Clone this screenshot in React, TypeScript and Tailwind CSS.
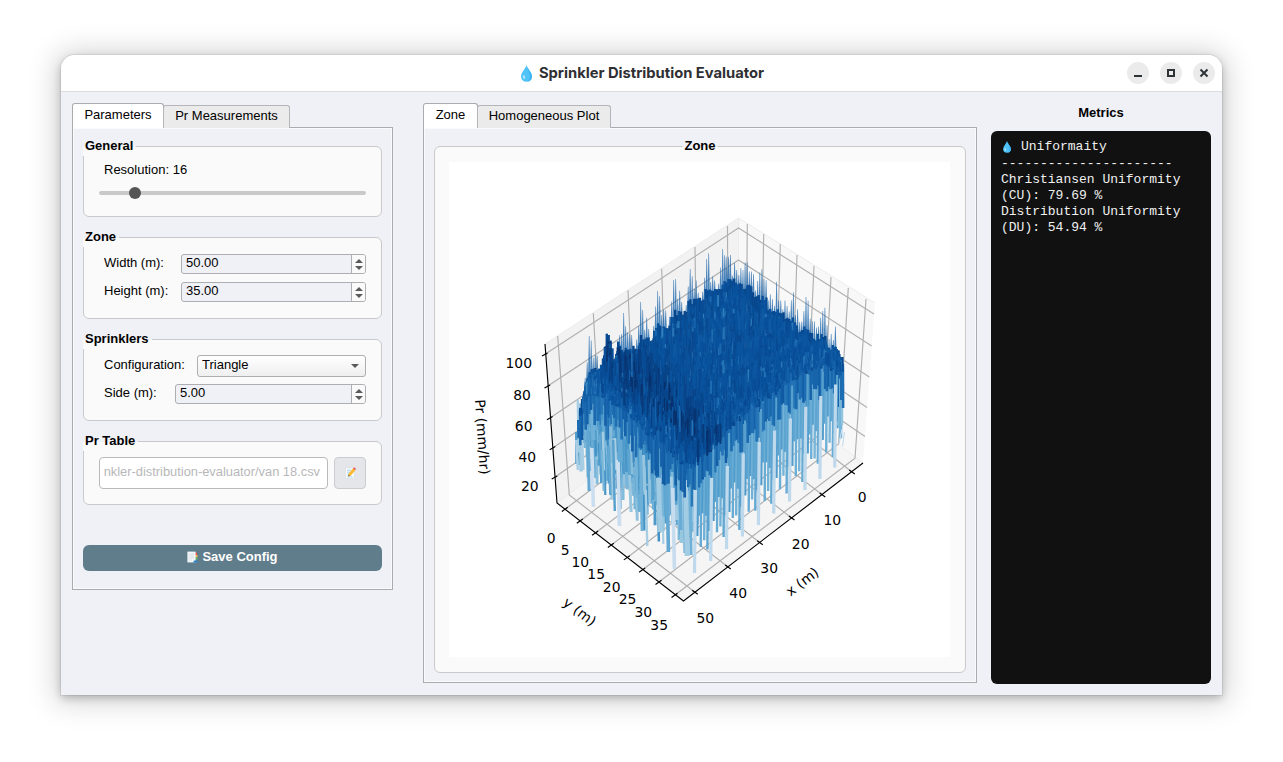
import type { ReactNode } from "react";

type Pt = [number, number];

/* ---------- helpers for the surface plot ---------- */

function makeRandom(seed: number) {
  let s = seed;
  return () => {
    s = (s * 1664525 + 1013904223) % 4294967296;
    return s / 4294967296;
  };
}

function interp(points: Pt[], x: number) {
  if (x <= points[0][0]) return points[0][1];
  for (let i = 1; i < points.length; i++) {
    const [x1, y1] = points[i];
    const [x0, y0] = points[i - 1];
    if (x <= x1) return y0 + ((y1 - y0) * (x - x0)) / (x1 - x0);
  }
  return points[points.length - 1][1];
}

const BLUES: [number, number, number][] = [
  [222, 235, 247],
  [198, 219, 239],
  [158, 202, 225],
  [107, 174, 214],
  [66, 146, 198],
  [33, 113, 181],
  [8, 81, 156],
  [8, 48, 107],
];

function blue(t: number) {
  const c = Math.max(0, Math.min(0.9999, t)) * (BLUES.length - 1);
  const i = Math.floor(c);
  const f = c - i;
  const a = BLUES[i];
  const b = BLUES[i + 1];
  return `rgb(${a.map((v, k) => Math.round(v + (b[k] - v) * f)).join(",")})`;
}

const TOP: Pt[] = [
  [575, 428], [579, 406], [583, 392], [585, 379], [589, 371], [601, 365], [603, 347], [606, 334], [609, 338],
  [613, 358], [617, 342], [621, 350], [626, 346], [636, 347], [639, 338], [652, 337], [655, 324], [669, 324],
  [672, 313], [685, 313], [688, 301], [701, 300], [704, 290], [718, 290], [721, 281], [738, 280],
  [742, 287], [750, 286], [755, 297], [765, 298], [768, 310], [780, 312], [784, 318], [794, 320],
  [797, 329], [804, 325], [812, 338], [824, 335], [827, 350], [834, 343], [838, 351], [842, 362], [844, 372],
];

const DARK_END: Pt[] = [
  [575, 432], [583, 396], [588, 388], [600, 390], [620, 402], [645, 426], [670, 450], [690, 464], [705, 445],
  [720, 428], [750, 405], [780, 382], [810, 362], [825, 358], [844, 372],
];

const LEFT_BOTTOM: Pt[] = [
  [575, 468], [585, 470], [592, 480], [605, 486], [620, 500], [635, 510], [650, 525], [665, 535], [680, 545], [697, 552],
];

const ICICLES: Pt[] = [
  [695.3, 573], [711.5, 561], [727.3, 549], [743.2, 536.5], [759.2, 525], [774.5, 513.5], [790.3, 501.5],
  [805.7, 490], [820.7, 479], [835.5, 467.5],
];

type Sliver = { x: number; w: number; y0: number; y1: number; fill: string; lean?: number };

function buildSurface() {
  const rnd = makeRandom(20718);
  const out: Sliver[] = [];
  const faint: Sliver[] = [];

  // thin spikes along the far edges
  const leftPeaks: Pt[] = [
    [588, 336], [622.5, 313], [639.5, 302], [656.5, 291], [672.5, 280], [689, 269], [705.5, 259], [721.5, 249],
  ];
  leftPeaks.forEach(([px, py]) => {
    for (let k = 0; k < 7; k++) {
      const x = px - 4 + k * 2;
      const h = [14, 20, 0, 34, 16, 22, 15][k];
      const base = interp(TOP, x) + 4;
      faint.push({ x, w: 2.4, y0: k === 2 ? py : base - h * (0.7 + rnd() * 0.5), y1: base + 4, fill: blue(0.78) });
    }
  });
  for (let x = 725; x < 835; x += 2.1) {
    const base = interp(TOP, x) + 4;
    const cycle = (x - 727) % 15.5;
    const h = cycle < 4 ? 22 + rnd() * 12 : 8 + rnd() * 15;
    faint.push({ x, w: 2.3, y0: base - h, y1: base + 4, fill: blue(0.8) });
  }

  // skirt on the left flank
  for (let x = 575; x < 696; x += 2) {
    const top = Math.max(interp(DARK_END, x) - 8, interp(TOP, x) + 4);
    const bot = interp(LEFT_BOTTOM, x) - rnd() * 32 + 4;
    out.push({ x, w: 3, y0: top, y1: bot, fill: blue(0.3 + rnd() * 0.28), lean: 0.6 });
    const midEnd = top + 20 + rnd() * 45;
    out.push({ x, w: 2.8, y0: top, y1: Math.min(bot, midEnd), fill: blue(0.5 + rnd() * 0.22), lean: 0.4 });
  }
  for (let i = 0; i < 105; i++) {
    const x = 576 + rnd() * 118;
    const b = interp(LEFT_BOTTOM, x);
    const start = b - 72 + rnd() * 44;
    const deep = rnd() < 0.22 ? 16 : -14;
    out.push({
      x,
      w: 2 + rnd() * 1.8,
      y0: start,
      y1: b + deep - rnd() * 18,
      fill: blue(0.24 + rnd() * 0.34),
      lean: 1,
    });
  }
  const leftTips: [number, number, number, number, number][] = [
    [590, 448, 507, 3.6, 0.12], [601, 450, 491, 2.2, 0.38], [586, 425, 491, 3, 0.46], [607.5, 446, 495, 2.6, 0.46],
    [612, 440, 511, 2.4, 0.5], [616, 460, 526, 3.8, 0.12], [628, 475, 512, 3, 0.3], [639, 450, 531, 3, 0.42],
    [644.5, 490, 546, 2.4, 0.25], [656, 478, 532, 5, 0.28], [665, 460, 552, 3.6, 0.46], [671, 488, 569, 3.6, 0.13],
    [683, 480, 556, 5, 0.27], [688, 465, 555, 3, 0.42], [580, 430, 470, 3, 0.25],
    [575, 440, 470, 2.6, 0.24], [650, 430, 500, 3, 0.5], [634, 435, 498, 3, 0.4], [678, 455, 530, 3, 0.44],
    [590, 403, 440, 4, 0.42], [616.5, 420, 462, 5, 0.45], [638, 404, 422, 2, 0.4], [660, 440, 475, 2.4, 0.5],
  ];
  leftTips.forEach(([x, y0, y1, w, c]) => out.push({ x, w, y0, y1, fill: blue(c), lean: 1.6 }));

  // repeating skirt on the right flank
  ICICLES.forEach(([tx, ty], i) => {
    const cols: [number, number, number, number][] = [
      [1.5, -121, -42, 0.54], [3.4, -106, -60, 0.5], [5, -108, -28, 0.45], [6.8, -104, -62, 0.53], [8.4, -103, -32, 0.42],
      [10, -106, -56, 0.5], [11.6, -109, -18, 0.47], [13, -112, -40, 0.5], [14.2, -108, -48, 0.44],
    ];
    cols.forEach(([dx, t, b, c]) => {
      const x = tx + dx;
      if (x > 842) return;
      const yy = ty - dx * 0.73;
      const y0 = Math.max(yy + t - 18, interp(TOP, x) + 5);
      out.push({ x, w: 2.4, y0, y1: yy + b + rnd() * 8, fill: blue(c - i * 0.004), lean: -0.7 });
    });
  });
  for (let x = 837; x < 843; x += 2) {
    out.push({ x, w: 2.2, y0: 374, y1: 420 + rnd() * 22, fill: blue(0.3 + rnd() * 0.16) });
  }

  // transition band under the plateau
  for (let x = 577; x < 842; x += 1.8) {
    const d = interp(DARK_END, x);
    const right = x > 697;
    const phase = (((x - 695) % 15.8) + 15.8) % 15.8;
    const drop = right ? (phase < 2 ? 10 : phase < 5 ? 30 : phase > 12 ? 34 : 22) : 6 + rnd() * 34;
    const y0 = Math.max(d - 24, interp(TOP, x) + 3);
    out.push({ x, w: 2.6, y0, y1: d + drop + rnd() * 8, fill: blue(0.68 + rnd() * 0.14), lean: 0.2 });
  }
  ICICLES.forEach(([tx, ty]) => {
    out.push({ x: tx + 0.8, w: 2, y0: ty - 116, y1: ty - 46, fill: blue(0.5), lean: -0.5 });
    out.push({ x: tx - 1.5, w: 3.2, y0: ty - 83, y1: ty, fill: blue(0.17), lean: -0.9 });
  });

  return { out, faint };
}

function buildPlateau() {
  const rnd = makeRandom(991);
  const outline: Sliver[] = [];
  const grain: Sliver[] = [];
  for (let x = 579; x < 842; x += 1.9) {
    const top = interp(TOP, x) + (rnd() - 0.4) * 8;
    const bot = interp(DARK_END, x) - 4 + rnd() * 14;
    outline.push({ x, w: 2.4, y0: top, y1: Math.max(bot, top + 8), fill: blue(0.85 + rnd() * 0.06) });
  }
  for (let i = 0; i < 4300; i++) {
    const x = 582 + rnd() * 258;
    const top = interp(TOP, x);
    const bot = interp(DARK_END, x) + 4;
    const len = 3 + rnd() * 11;
    const y = top + 3 + rnd() * Math.max(0, bot - top - len);
    const band = (((y + 0.28 * x) % 17) + 17) % 17;
    const mid = 335 + (x - 600) * 0.88;
    const ridge = Math.exp(-Math.pow((y - mid) / 28, 2)) * (x < 735 ? 1 : 0);
    const near = Math.max(0, 1 - (bot - y) / 28);
    let t = 0.855 + (rnd() - 0.5) * 0.08;
    if (band < 4 && rnd() < 0.36) t -= 0.08 + rnd() * 0.12;
    t += ridge * 0.16 * rnd();
    t -= near * 0.09 * rnd();
    if (x < 600) t -= 0.08 * rnd();
    grain.push({ x, w: 1 + rnd() * 1.4, y0: y, y1: y + (ridge > 0.4 ? len * 1.9 : len), fill: blue(t) });
  }
  return { outline, grain };
}

const surface = buildSurface();
const plateau = buildPlateau();

function Slivers({ items, opacity, pointed }: { items: Sliver[]; opacity?: number; pointed?: boolean }) {
  return (
    <g opacity={opacity}>
      {items.map((s, i) => {
        const l = s.lean ?? 0;
        const d = pointed
          ? `M${(s.x + s.w / 2 - 0.3).toFixed(1)} ${s.y0.toFixed(1)}h.6L${(s.x + s.w).toFixed(1)} ${s.y1.toFixed(1)}h${(-s.w).toFixed(1)}Z`
          : `M${s.x.toFixed(1)} ${s.y0.toFixed(1)}h${s.w.toFixed(1)}L${(s.x + s.w + l).toFixed(1)} ${s.y1.toFixed(1)}h${(-s.w).toFixed(1)}Z`;
        return <path key={i} fill={s.fill} d={d} />;
      })}
    </g>
  );
}

const X_LINES: [number, number, number, number, number, number][] = [
  [557.7, 336, 569.3, 495, 695, 592.3],
  [593.3, 313.3, 602.5, 469, 728, 567],
  [628, 290.3, 634.6, 445, 760, 542.7],
  [661.7, 268.7, 666, 421, 791.7, 518],
  [695, 247, 697, 398, 822.5, 495],
  [727.5, 226, 728, 375, 852, 472],
];

const Y_LINES: [number, number, number, number, number, number][] = [
  [747.3, 224, 746, 373, 565, 509.3],
  [763.7, 234, 761, 385, 580, 521],
  [780.3, 244, 776, 396, 595.3, 533],
  [797, 255, 792, 408, 611, 545.3],
  [814, 266, 807, 420, 627, 557.7],
  [831, 277, 823, 432, 642.3, 570],
  [848.3, 288, 838.5, 444, 658.7, 582.3],
  [866, 299, 855, 458.3, 674.7, 595.3],
];

const Z_LINES: [number, number, number, number, number][] = [
  [545, 354.3, 228, 874, 314],
  [547.5, 386.3, 260, 871.7, 346],
  [550, 418, 291, 869.3, 377],
  [552.7, 448, 321, 867, 407.5],
  [554.7, 477.3, 350, 865, 436.5],
];

const TICK_LABELS: [string, number, number][] = [
  ["100", 518.8, 363], ["80", 522, 395], ["60", 523.7, 426], ["40", 527.3, 457], ["20", 529.8, 486],
  ["0", 551.2, 538], ["5", 565.2, 550], ["10", 580.3, 562], ["15", 596.2, 574], ["20", 611.7, 587],
  ["25", 627.5, 599], ["30", 643.3, 612], ["35", 659.2, 625],
  ["0", 862.2, 497], ["10", 832.3, 520], ["20", 800.7, 544], ["30", 769.2, 568], ["40", 738.2, 593], ["50", 705.3, 618],
];

function SurfacePlot() {
  return (
    <svg viewBox="449 162 501 495" className="block h-[495px] w-[501px] bg-white">
      <path d="M545 344 738.5 218 738 367 557 503Z" fill="#f2f2f2" />
      <path d="M738.5 218 875 303 863 463 738 367Z" fill="#f8f8f8" />
      <path d="M557 503 738 367 863 463 683.5 601Z" fill="#f5f5f5" />
      <path
        d="M545 344 738.5 218 875 303M738.5 218V367M557 503 738 367 863 463"
        fill="none"
        stroke="#ececec"
        strokeWidth="1"
      />
      <g fill="none" stroke="#b0b0b0" strokeWidth="1.15">
        {X_LINES.map((l) => (
          <path key={l[0]} d={`M${l[0]} ${l[1]}L${l[2]} ${l[3]}L${l[4]} ${l[5]}`} />
        ))}
        {Y_LINES.map((l) => (
          <path key={l[0]} d={`M${l[0]} ${l[1]}L${l[2]} ${l[3]}L${l[4]} ${l[5]}`} />
        ))}
        {Z_LINES.map((l) => (
          <path key={l[0]} d={`M${l[0]} ${l[1]}L738.5 ${l[2]}L${l[3]} ${l[4]}`} />
        ))}
      </g>
      <g fill="none" stroke="#000" strokeWidth="1.15">
        <path d="M545 344 557 503 683.5 601 863 463" />
        {X_LINES.map((l) => (
          <path key={l[4]} d={`M${l[4] - 2.8} ${l[5] - 2}l5.6 4`} />
        ))}
        {Y_LINES.map((l) => (
          <path key={l[4]} d={`M${l[4] - 3.2} ${l[5] + 2.2}l6 -4.2`} />
        ))}
        {Z_LINES.map((l) => (
          <path key={l[1]} d={`M${l[0] - 3} ${l[1] + 1.8}l5.6 -3.2`} />
        ))}
      </g>
      <Slivers items={surface.faint} opacity={0.75} pointed />
      <Slivers items={surface.out} />
      <Slivers items={plateau.outline} />
      <Slivers items={plateau.grain} />
      <path d="M844.5 432l-2 14M842 429l-3 15" stroke="#c6dbef" strokeWidth="1.2" />
      <g fill="#000" fontFamily="'DejaVu Sans', sans-serif" fontSize="13.9" textAnchor="middle">
        {TICK_LABELS.map(([t, x, y]) => (
          <text key={`${x}-${y}`} x={x} y={y + 5}>
            {t}
          </text>
        ))}
        <text transform="translate(482 437) rotate(86)" y="4.5">Pr (mm/hr)</text>
        <text transform="translate(579.5 612) rotate(37.5)" y="4.5">y (m)</text>
        <text transform="translate(802.5 582) rotate(-37.5)" y="4.5">x (m)</text>
      </g>
    </svg>
  );
}

/* ---------- small drawings ---------- */

function Drop({ className }: { className: string }) {
  return (
    <svg viewBox="0 0 11 17" className={className}>
      <path d="M5.5 0C6.5 3.8 11 7.6 11 11.4A5.5 5.4 0 0 1 0 11.4C0 7.6 4.5 3.8 5.5 0Z" fill="#4fc3f7" />
      <path d="M5.5 0C6.5 3.8 11 7.6 11 11.4A5.5 5.4 0 0 1 7 16.6C10 14 9.4 9 5.5 0Z" fill="#3db4f2" />
      <ellipse cx="3" cy="12" rx="1.1" ry="2" fill="#a9e4fb" transform="rotate(-20 3 12)" />
    </svg>
  );
}

function Memo() {
  return (
    <svg viewBox="0 0 11 12" className="h-[12px] w-[11px]">
      <path d="M.5 1h8.8v10.4H.5z" fill="#fbfdfe" stroke="#cfd4d8" strokeWidth=".5" />
      <path d="M2 3.2h4.5M2 5.2h3.5M2 7.2h2M2 9.8h5.5" stroke="#8cc9e8" strokeWidth=".8" />
      <path d="M3.1 9.4 3.8 6.6 8.2 1.2 10.4 2.9 6 8.4Z" fill="#fdb92c" />
      <path d="M3.1 9.4 3.6 7.4 4.8 8.6Z" fill="#5b4a3c" />
      <path d="M8 1.5 9.1.2 11 1.8 10 3.2Z" fill="#ef5b5b" />
    </svg>
  );
}

function Tabs() {
  return (
    <svg viewBox="0 0 11 12" className="h-[12px] w-[11px]">
      <path d="M8 1.5h2v2.4H8z" fill="#ef5350" />
      <path d="M8 4h2.5v2.2H8z" fill="#ffb74d" />
      <path d="M8 6.4h2.6v2H8z" fill="#66bb6a" />
      <path d="M.4.6h8.2v10.8H.4z" fill="#f5f8fa" />
      <path d="M1.6 3h5.6M1.6 5h5.6M1.6 7h5.6M1.6 9h3" stroke="#c9d3d9" strokeWidth=".7" />
      <path d="M7 9.6h3.4v1.8H6z" fill="#2e86c8" />
    </svg>
  );
}

/* ---------- widgets ---------- */

function TabBar({ active, other, first, second }: { active: string; other: string; first: string; second: string }) {
  return (
    <div className="relative z-10 -mb-px flex h-[25px] items-end">
      <div
        className={`${first} flex h-[25px] items-center justify-center rounded-t-[3px] border border-b-0 border-[#a9abae] bg-white pb-[2px]`}
      >
        {active}
      </div>
      <div
        className={`${second} -ml-px flex h-[23px] items-center justify-center rounded-t-[3px] border border-b-0 border-[#b4b5b8] bg-[#ebebeb] pb-[3px]`}
      >
        {other}
      </div>
    </div>
  );
}

function Group({
  title,
  className,
  centered,
  children,
}: {
  title: string;
  className: string;
  centered?: boolean;
  children: ReactNode;
}) {
  return (
    <section className={`relative rounded-[6px] border border-[#c9c9cb] bg-[#fafafa] ${className}`}>
      <h2
        className={`absolute -top-[9px] flex h-[18px] items-center bg-linear-to-b from-[#f0f1f6] from-50% to-[#fafafa] to-50% pb-[3px] font-bold ${
          centered ? "left-1/2 -translate-x-1/2 px-[2px]" : "-left-px pr-[3px] pl-[2px]"
        }`}
      >
        {title}
      </h2>
      {children}
    </section>
  );
}

function SpinBox({ value, className }: { value: string; className: string }) {
  return (
    <div className={`flex h-[20px] overflow-hidden rounded-[3px] border border-[#acaeb1] bg-[#f0f1f6] ${className}`}>
      <span className="flex-1 pl-[4px] leading-[16px]">{value}</span>
      <span className="flex w-[14px] flex-col items-center justify-center gap-[3px] border-l border-[#acaeb1] bg-[#fafafa]">
        <svg viewBox="0 0 8 4" className="h-[4px] w-[8px]">
          <path d="M0 4 4 0 8 4Z" fill="#5a5a5c" />
        </svg>
        <svg viewBox="0 0 8 4" className="h-[4px] w-[8px]">
          <path d="M0 0 4 4 8 0Z" fill="#5a5a5c" />
        </svg>
      </span>
    </div>
  );
}

function WindowButton({ children }: { children: ReactNode }) {
  return (
    <button className="flex size-[22px] items-center justify-center rounded-full bg-[#ebebeb]">
      <svg viewBox="0 0 10 10" className="size-[10px]" fill="none" stroke="#2e3436" strokeWidth="2">
        {children}
      </svg>
    </button>
  );
}

export default function App() {
  return (
    <div className="h-[762px] w-[1283px] overflow-hidden bg-white pt-[55px] pl-[61px] font-['Liberation_Sans',Arial,sans-serif] text-[13px] text-black">
      <div className="flex h-[640px] w-[1161px] flex-col overflow-hidden rounded-t-[14px] bg-[#f0f1f6] shadow-[0_0_0_1px_rgba(0,0,0,0.06),0_3px_8px_rgba(0,0,0,0.22),0_2px_28px_6px_rgba(0,0,0,0.17)]">
        <header className="flex h-[37px] shrink-0 items-center border-b border-[#dcdcdf] bg-white">
          <div className="w-[150px]" />
          <div className="flex flex-1 items-center justify-center gap-[7px] pl-[2px]">
            <Drop className="h-[17px] w-[11px]" />
            <h1 className="font-['Inter',sans-serif] text-[14.74px] font-bold whitespace-nowrap text-[#2f2f33]">
              Sprinkler Distribution Evaluator
            </h1>
          </div>
          <div className="flex w-[150px] justify-end gap-[11px] pr-[7px]">
            <WindowButton>
              <path d="M1 8h8" />
            </WindowButton>
            <WindowButton>
              <path d="M2 2h6v6H2z" />
            </WindowButton>
            <WindowButton>
              <path d="M1.5 1.5 8.5 8.5M8.5 1.5 1.5 8.5" />
            </WindowButton>
          </div>
        </header>

        <main className="flex flex-1 pt-[11px] pr-[11px] pb-[11px] pl-[11px]">
          <aside className="w-[321px]">
            <TabBar active="Parameters" other="Pr Measurements" first="w-[92px]" second="w-[127px]" />
            <div className="flex h-[463px] flex-col border border-[#a9abae] px-[10px] pt-[18px] shadow-[inset_0_0_0_1px_#fafafc]">
              <Group title="General" className="mb-[20px] h-[71px] px-[15px] pt-[14px]">
                <div className="pl-[5px] leading-[18px]">Resolution: 16</div>
                <div className="mt-[8px] flex h-[12px] items-center rounded-full">
                  <div className="flex h-[4px] w-full items-center rounded-full bg-[#c9c9c9] pl-[30px]">
                    <div className="size-[12px] rounded-full bg-[#555]" />
                  </div>
                </div>
              </Group>

              <Group title="Zone" className="mb-[20px] flex h-[82px] flex-col gap-[8px] px-[15px] pt-[16px]">
                <div className="flex">
                  <label className="w-[82px] pl-[5px] leading-[18px]">Width (m):</label>
                  <SpinBox value="50.00" className="flex-1" />
                </div>
                <div className="flex">
                  <label className="w-[82px] pl-[5px] leading-[18px]">Height (m):</label>
                  <SpinBox value="35.00" className="flex-1" />
                </div>
              </Group>

              <Group title="Sprinklers" className="mb-[20px] flex h-[82px] flex-col gap-[7px] px-[15px] pt-[15px]">
                <div className="flex">
                  <label className="w-[98px] pl-[5px] leading-[20px]">Configuration:</label>
                  <div className="flex h-[22px] flex-1 items-center justify-between rounded-[3px] border border-[#acaeb1] bg-linear-to-b from-white to-[#efeff0] pr-[6px] pl-[4px]">
                    <span className="pb-[3px]">Triangle</span>
                    <svg viewBox="0 0 8 4" className="h-[4px] w-[8px]">
                      <path d="M0 0 4 4 8 0Z" fill="#5a5a5c" />
                    </svg>
                  </div>
                </div>
                <div className="flex">
                  <label className="w-[76px] pl-[5px] leading-[18px]">Side (m):</label>
                  <SpinBox value="5.00" className="flex-1" />
                </div>
              </Group>

              <Group title="Pr Table" className="mb-[40px] flex h-[64px] gap-[6px] px-[15px] pt-[15px]">
                <div className="flex h-[32px] flex-1 items-center justify-end rounded-[4px] border border-[#b9babc] bg-white pr-[7px] pb-[2px] text-[12.85px] whitespace-nowrap text-[#b7b7b9]">
                  nkler-distribution-evaluator/van 18.csv
                </div>
                <button className="flex h-[32px] w-[32px] items-center justify-center rounded-[4px] border border-[#cbccd0] bg-[#e5e6ea]">
                  <Memo />
                </button>
              </Group>

              <button className="flex h-[26px] items-center justify-center gap-[4px] rounded-[6px] bg-[#607d8b] pb-[2px] font-bold text-white">
                <Tabs />
                <span className="pb-px">Save Config</span>
              </button>
            </div>
          </aside>

          <section className="ml-[30px] w-[554px]">
            <TabBar active="Zone" other="Homogeneous Plot" first="w-[55px]" second="w-[134px]" />
            <div className="h-[556px] border border-[#a9abae] px-[10px] pt-[18px] shadow-[inset_0_0_0_1px_#fafafc]">
              <Group title="Zone" centered className="h-[527px] px-[14px] pt-[15px]">
                <SurfacePlot />
              </Group>
            </div>
          </section>

          <section className="ml-[14px] flex w-[220px] flex-col">
            <h2 className="h-[28px] text-center leading-[20px] font-bold">Metrics</h2>
            <div className="h-[553px] rounded-[6px] bg-[#111] px-[10px] pt-[7px] font-['Liberation_Mono',monospace] text-[13px] leading-[16px] text-[#f0f0f0]">
              <div className="flex h-[18px] items-center">
                <Drop className="mr-[8px] ml-[2px] h-[12px] w-[8px]" />
                <span className="pb-px pl-[2px]">Uniformaity</span>
              </div>
              <div>----------------------</div>
              <div>Christiansen Uniformity</div>
              <div>(CU): 79.69 %</div>
              <div>Distribution Uniformity</div>
              <div>(DU): 54.94 %</div>
            </div>
          </section>
        </main>
      </div>
    </div>
  );
}
